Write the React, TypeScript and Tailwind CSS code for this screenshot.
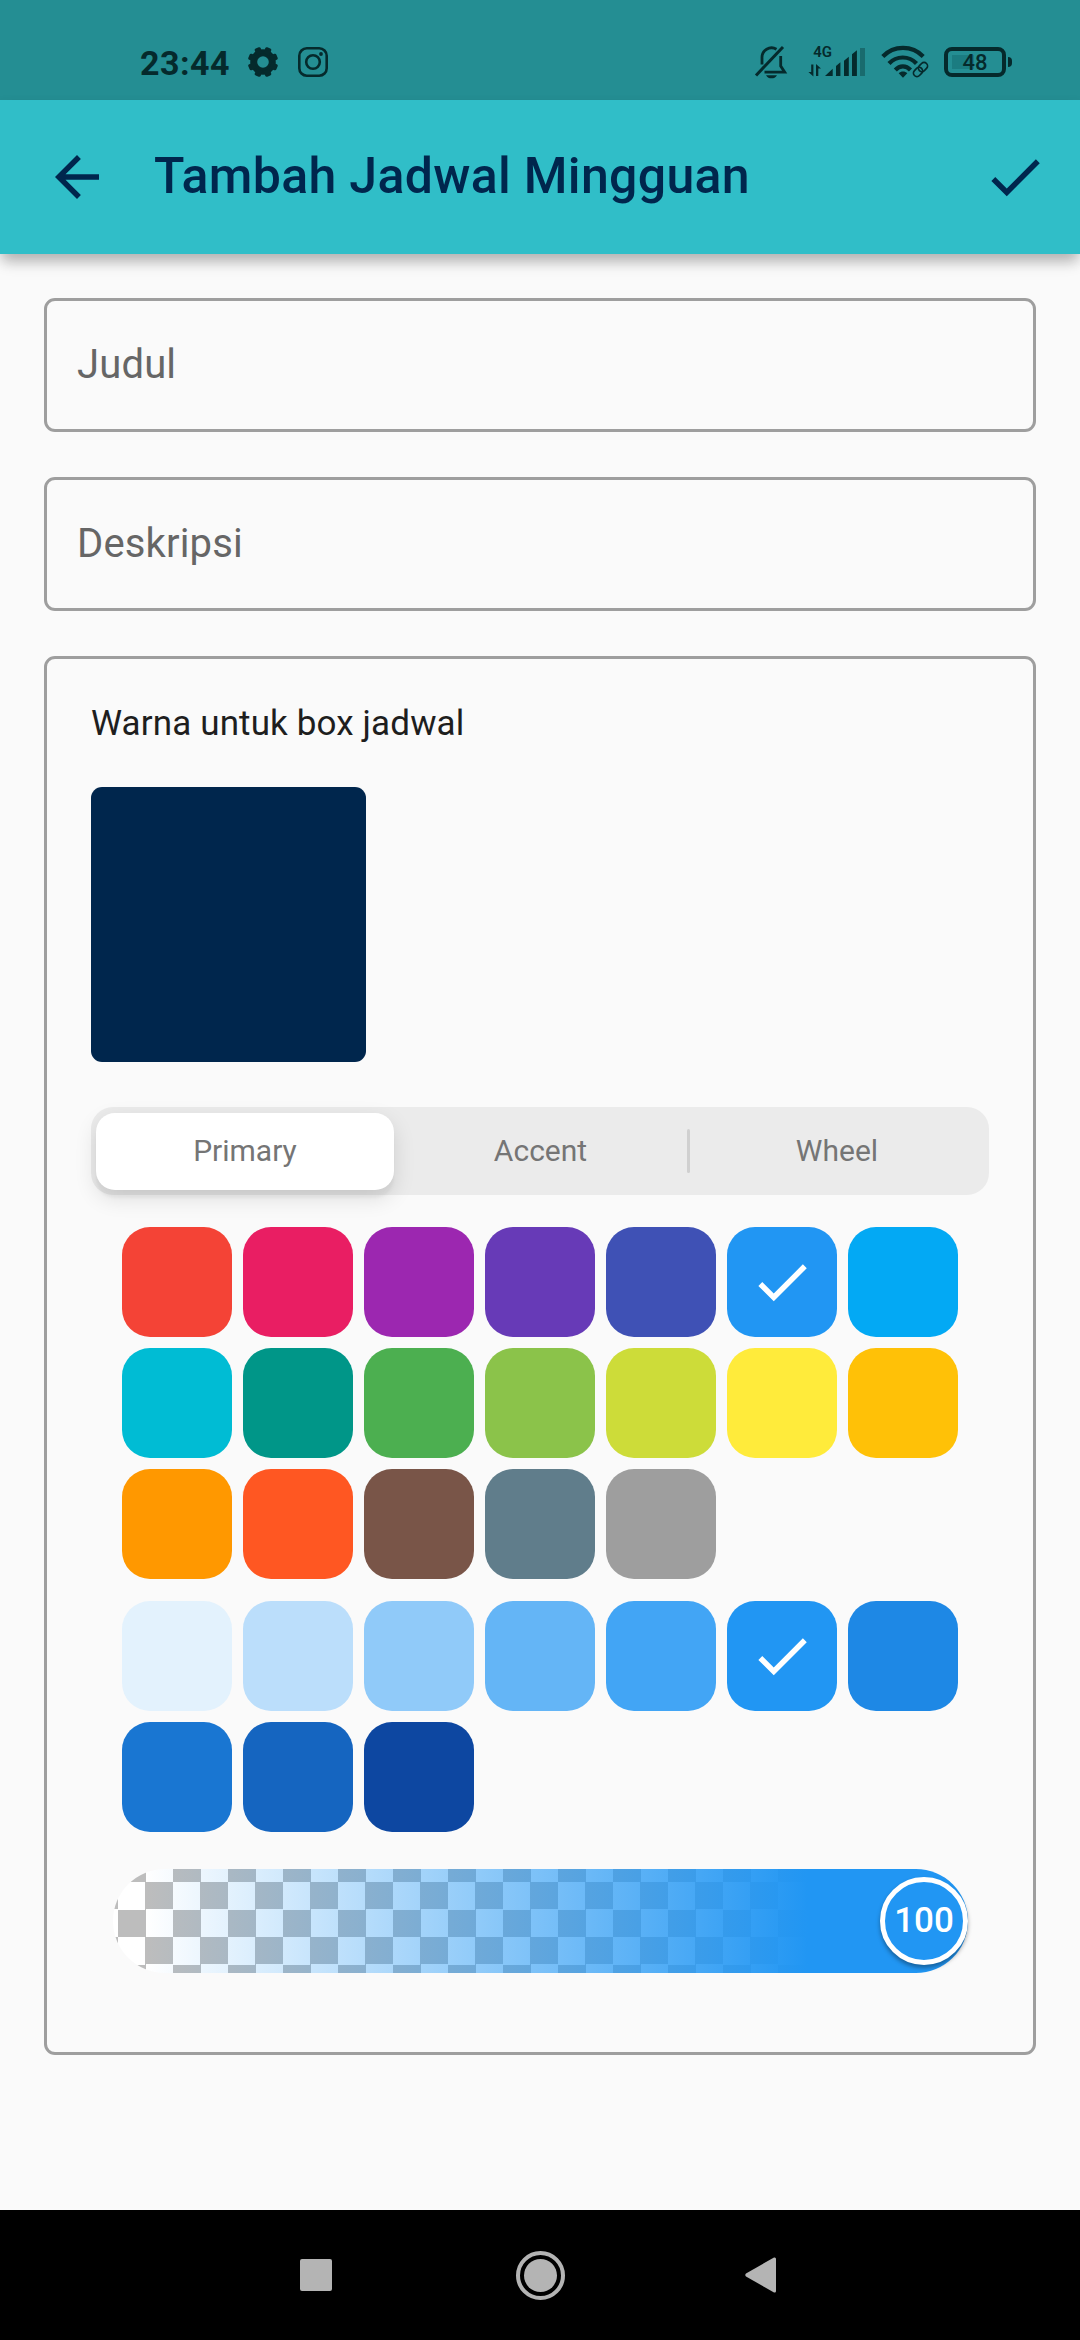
import React from "react";

const PRIMARY = [
  "bg-[#f44336]", "bg-[#e91e63]", "bg-[#9c27b0]", "bg-[#673ab7]", "bg-[#3f51b5]", "bg-[#2196f3]", "bg-[#03a9f4]",
  "bg-[#00bcd4]", "bg-[#009688]", "bg-[#4caf50]", "bg-[#8bc34a]", "bg-[#cddc39]", "bg-[#ffeb3b]", "bg-[#ffc107]",
  "bg-[#ff9800]", "bg-[#ff5722]", "bg-[#795548]", "bg-[#607d8b]", "bg-[#9e9e9e]",
];

const SHADES = [
  "bg-[#e3f2fd]", "bg-[#bbdefb]", "bg-[#90caf9]", "bg-[#64b5f6]", "bg-[#42a5f5]", "bg-[#2196f3]", "bg-[#1e88e5]",
  "bg-[#1976d2]", "bg-[#1565c0]", "bg-[#0d47a1]",
];

function CheckIcon({ className }: { className: string }) {
  return (
    <svg viewBox="0 0 24 24" fill="currentColor" className={className}>
      <path d="M9 16.17 4.83 12l-1.42 1.41L9 19 21 7l-1.41-1.41z" />
    </svg>
  );
}

function GearIcon() {
  return (
    <svg viewBox="0 0 32 32" className="size-8">
      <circle cx="16" cy="16" r="9.3" fill="none" stroke="currentColor" strokeWidth="7" />
      <g fill="currentColor">
        {[0, 45, 90, 135, 180, 225, 270, 315].map((a) => (
          <rect key={a} x="12.8" y="0.8" width="6.4" height="7" rx="1.6" transform={`rotate(${a + 22.5} 16 16)`} />
        ))}
      </g>
    </svg>
  );
}

function InstagramIcon() {
  return (
    <svg viewBox="0 0 32 32" className="size-8" fill="none" stroke="currentColor" strokeWidth="2.6">
      <rect x="2.3" y="2.3" width="27.4" height="27.4" rx="7.5" />
      <circle cx="16" cy="16" r="6.8" />
      <circle cx="24" cy="8" r="1.9" fill="currentColor" stroke="none" />
    </svg>
  );
}

function BellOffIcon() {
  return (
    <svg viewBox="0 0 34 36" className="h-9 w-[34px]" fill="none" stroke="currentColor" strokeWidth="2.8">
      <path d="M8 20.500V14a9.600 9.600 0 0 1 14.500-8.800M26.700 12V22l4 6.200H10.500" />
      <path d="M29 3 2 31.500" strokeWidth="3" />
      <path d="M12 31.200h11c-1.500 2.600-3 3-5.500 3s-4-.4-5.500-3z" fill="currentColor" stroke="none" />
    </svg>
  );
}

function SignalIcon() {
  return (
    <svg viewBox="0 0 58 36" className="h-9 w-[58px]" fill="currentColor">
      <text x="5.300" y="12.800" fontSize="15" fontWeight="600" className="font-[Roboto]">4G</text>
      <path d="M3.200 20.500h2.200v12L0.400 28h2.800zM8 32V20l5 4.500h-2.700V32z" />
      <path d="M17 32l7.700-7.200V32zM28 22l4.400-3.700V32H28zM36 16.700l4.800-3.900V32H36zM44 10.300l4.900-4V32H44z" />
      <rect x="52" y="4" width="5" height="28" opacity="0.35" />
    </svg>
  );
}

function WifiIcon() {
  return (
    <svg viewBox="0 0 48 36" className="h-9 w-12" fill="none" stroke="currentColor" strokeWidth="4.200">
      <path d="M1.800 12.500c11-11.500 29.400-11.500 40.400 0" />
      <path d="M8 19.500c7.500-8 20-8 27.500 0" />
      <path d="M14.300 26c4.500-4.800 10.700-4.800 15.200 0" />
      <path d="M22 33.800l-4.300-4.500c2.300-2.300 6.300-2.300 8.600 0z" fill="currentColor" stroke="none" />
      <g strokeWidth="1.700" transform="rotate(-45 39.500 25.500)">
        <rect x="31" y="22" width="10" height="7" rx="3.500" />
        <rect x="38" y="22" width="10" height="7" rx="3.500" />
      </g>
    </svg>
  );
}

function Field({ label }: { label: string }) {
  return (
    <div className="flex h-[134px] items-center rounded-[11px] border-3 border-[#9e9e9e] pb-px pl-[30px]">
      <span className="text-[40px] leading-none tracking-[0.15px] text-[#666]">{label}</span>
    </div>
  );
}

function Palette({ colors, selected }: { colors: string[]; selected: number }) {
  return (
    <div className="grid grid-cols-[repeat(7,110px)] justify-center gap-[11px]">
      {colors.map((color, i) => (
        <div key={i} className={`flex size-[110px] items-center justify-center rounded-[28px] ${color}`}>
          {i === selected && <CheckIcon className="size-[66px] text-white" />}
        </div>
      ))}
    </div>
  );
}

export default function App() {
  return (
    <div className="flex h-[2340px] w-[1080px] flex-col overflow-hidden bg-[#fafafa] font-[Roboto,sans-serif]">
      <div className="flex h-[100px] shrink-0 items-start bg-[#248e93] px-[68px] pt-[46px] text-[#052a2c]">
        <div className="flex h-8 flex-1 items-center pl-[72px]">
          <span className="w-[107px] pt-0.5 text-[34px] font-bold leading-8 tracking-[0.5px]">23:44</span>
          <GearIcon />
          <div className="w-[18px]" />
          <InstagramIcon />
        </div>
        <div className="flex h-8 items-center">
          <BellOffIcon />
          <div className="w-[20px]" />
          <SignalIcon />
          <div className="w-[15px]" />
          <WifiIcon />
          <div className="w-[15px]" />
          <div className="flex h-[30px] w-[62px] items-center justify-center rounded-[8px] border-4 border-current bg-[linear-gradient(90deg,#1b7c81_26px,transparent_26px)] bg-clip-content p-1 text-[22px] font-medium leading-none">
            <span className="pt-0.5">48</span>
          </div>
          <div className="ml-0.5 h-2.5 w-1 rounded-r bg-current" />
        </div>
      </div>

      <header className="flex h-[154px] shrink-0 items-center bg-[#30bec8] text-[#00264d] shadow-[0_11px_14px_-3px_rgba(0,0,0,0.2),0_6px_12px_rgba(0,0,0,0.12)]">
        <svg viewBox="0 0 24 24" fill="currentColor" className="ml-11 size-[66px]">
          <path d="M20 11H7.830l5.590-5.590L12 4l-8 8 8 8 1.410-1.410L7.830 13H20z" />
        </svg>
        <h1 className="ml-[44px] flex-1 pb-0.5 text-[50px] font-medium leading-none tracking-[0.33px]">Tambah Jadwal Mingguan</h1>
        <CheckIcon className="mr-8 size-[66px]" />
      </header>

      <main className="flex flex-1 flex-col gap-[45px] px-11 pt-11">
        <Field label="Judul" />
        <Field label="Deskripsi" />
        <section className="flex h-[1399px] flex-col rounded-[11px] border-3 border-[#9e9e9e] px-11 pt-11">
          <p className="h-10 text-[35px] leading-[42px] tracking-[0.13px] text-[#1e1e1e]">Warna untuk box jadwal</p>
          <div className="mt-[44px] size-[275px] rounded-[11px] bg-[#00264d]" />

          <div className="mt-[45px] flex h-[88px] items-center rounded-[22px] bg-[#ebebeb] p-[5px] text-[30px] text-[#757575]">
            <div className="flex h-[77px] w-[298px] items-center justify-center rounded-[19px] bg-white pb-0.5 shadow-[0_8px_22px_rgba(0,0,0,0.12),0_8px_3px_rgba(0,0,0,0.04)]">Primary</div>
            <div className="flex w-[293px] items-center justify-center pb-0.5">Accent</div>
            <div className="h-11 w-[3px] rounded-full bg-[#d0d0d0]" />
            <div className="flex flex-1 items-center justify-center pb-0.5">Wheel</div>
          </div>

          <div className="mt-8 flex flex-col gap-[22px]">
            <Palette colors={PRIMARY} selected={5} />
            <Palette colors={SHADES} selected={5} />
          </div>

          <div className="relative ml-[22px] mr-[21px] mt-[37px] h-[104px]">
            <div className="h-full w-full overflow-hidden rounded-full bg-[repeating-conic-gradient(#bdbdbd_0_25%,#fff_0_50%)] bg-[length:55px_55px] bg-[position:5px_13px]">
              <div className="h-full w-full bg-[linear-gradient(90deg,rgba(33,150,243,0)_33px,rgb(33,150,243)_695px)]" />
            </div>
            <div className="absolute right-0 top-2 flex size-[88px] items-center justify-center rounded-full border-5 border-white bg-[#2196f3] text-[35px] font-medium text-white shadow-[0_3px_4px_rgba(0,0,0,0.35)]">100</div>
          </div>
        </section>
      </main>

      <nav className="flex h-[130px] shrink-0 items-center bg-black text-[#b4b4b4]">
        <div className="ml-[300px] h-8 w-8 rounded-[2px] bg-current" />
        <div className="ml-[184px] flex size-[49px] items-center justify-center rounded-full border-4 border-current">
          <div className="size-[33px] rounded-full bg-current" />
        </div>
        <svg viewBox="0 0 32 36" className="ml-[180px] h-9 w-8" fill="currentColor">
          <path d="M29 0.500 1 16.500q-1.500 1.500 0 3L29 35.500q2 .5 2-1.500V2q0-2-2-1.500z" />
        </svg>
      </nav>
    </div>
  );
}
